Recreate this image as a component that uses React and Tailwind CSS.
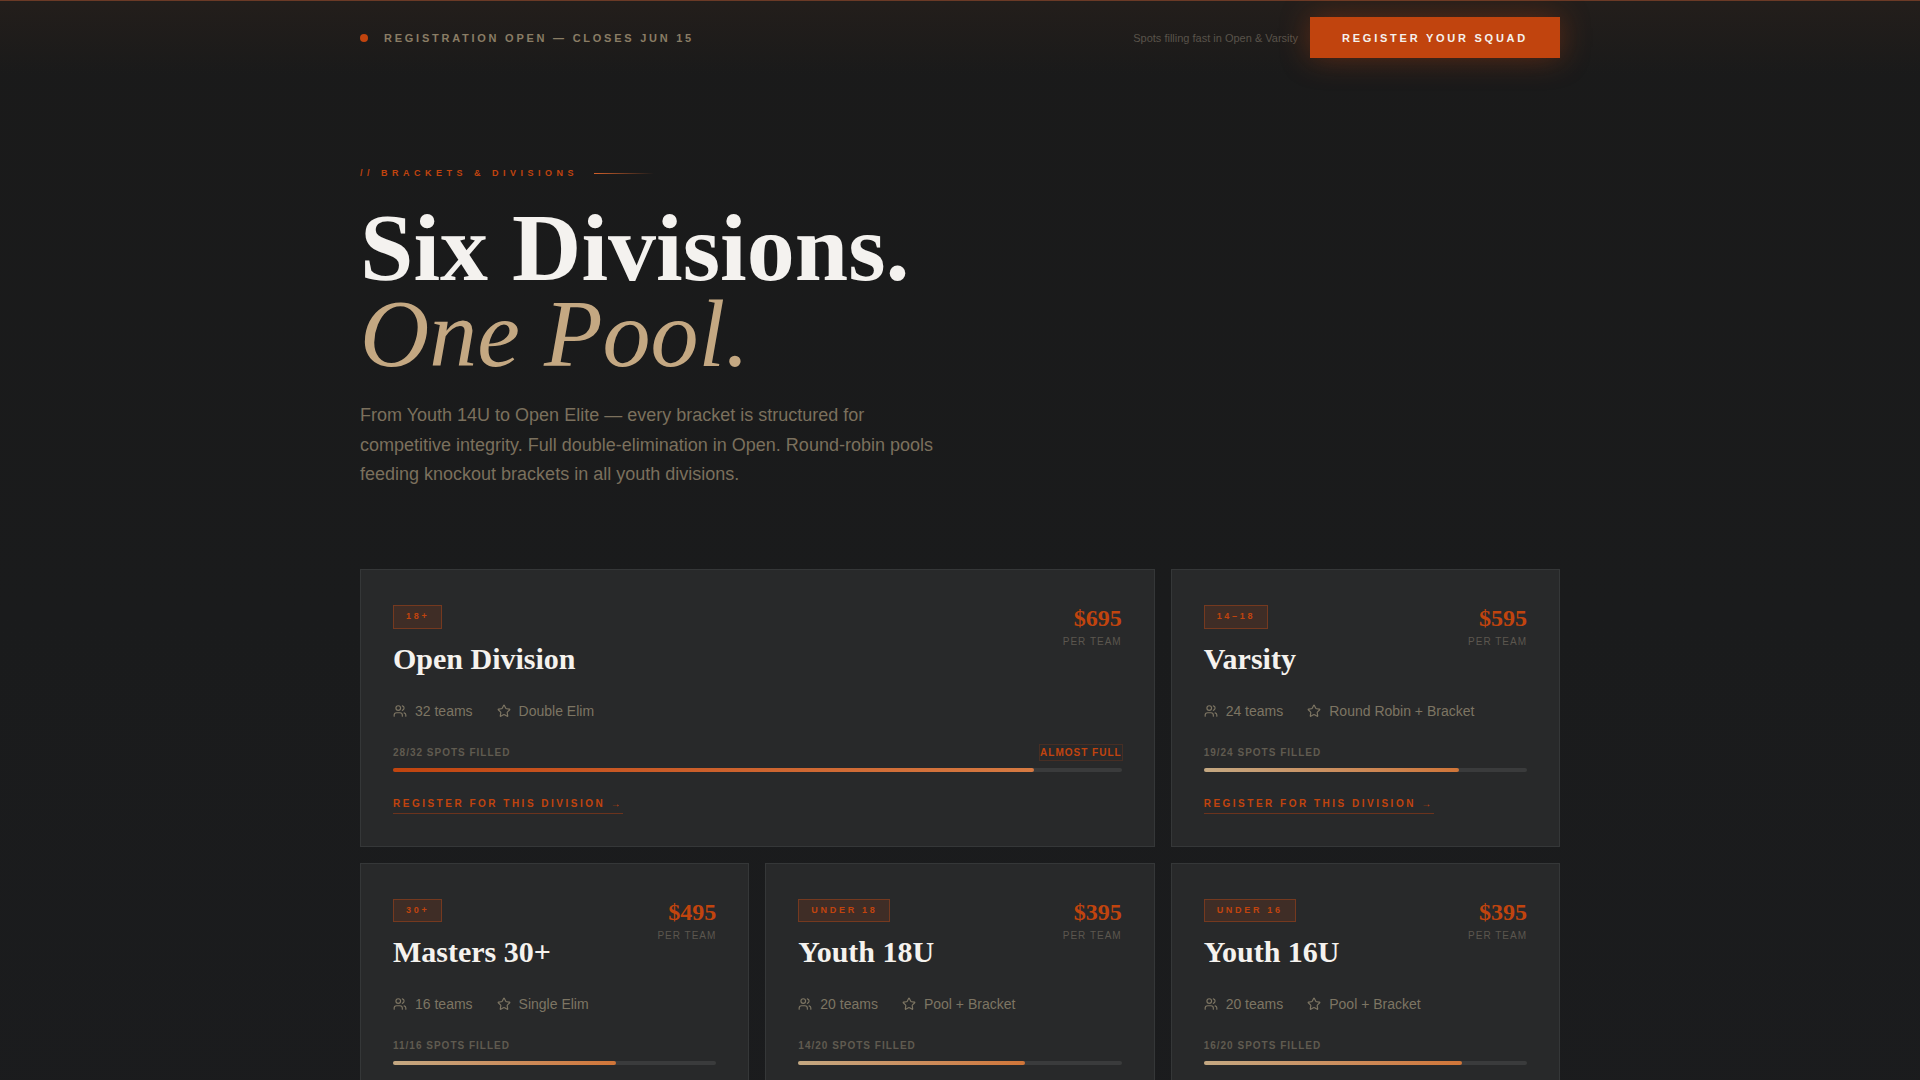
import { Star, Users } from "lucide-react";

const divisions = [
  { age: "18+", name: "Open Division", price: "$695", teams: 32, format: "Double Elim", filled: 28, percent: 88, hot: true, wide: true },
  { age: "14–18", name: "Varsity", price: "$595", teams: 24, format: "Round Robin + Bracket", filled: 19, percent: 79 },
  { age: "30+", name: "Masters 30+", price: "$495", teams: 16, format: "Single Elim", filled: 11, percent: 69 },
  { age: "UNDER 18", name: "Youth 18U", price: "$395", teams: 20, format: "Pool + Bracket", filled: 14, percent: 70 },
  { age: "UNDER 16", name: "Youth 16U", price: "$395", teams: 20, format: "Pool + Bracket", filled: 16, percent: 80 },
];

function TopBar() {
  return (
    <header className="border-t border-[#6b3a26] bg-linear-to-b from-[#231e1b] to-[#1a1a1a]/0">
      <div className="mx-auto flex max-w-[1200px] items-center justify-between py-4">
        <div className="flex items-center gap-4 pt-px">
          <span className="size-2 rounded-full bg-[#c1440e]" />
          <p className="text-[11px] leading-4 font-bold tracking-[0.25em] text-[#8a7d65]">
            REGISTRATION OPEN — CLOSES JUN 15
          </p>
        </div>
        <div className="flex items-center gap-3">
          <span className="pt-px text-[11px] leading-4 text-[#59534a]">Spots filling fast in Open &amp; Varsity</span>
          <button
            type="button"
            className="bg-[#c1440e] px-8 pt-[13px] pb-3 text-[11px] leading-4 font-bold tracking-[0.25em] text-[#f5f2ee] shadow-[0_0_30px_rgba(193,68,14,0.4)]"
          >
            REGISTER YOUR SQUAD
          </button>
        </div>
      </div>
    </header>
  );
}

function Intro() {
  return (
    <section>
      <div className="flex items-center gap-4">
        <p className="text-[9px] leading-[14px] font-bold tracking-[0.5em] text-[#c1440e]">
          // BRACKETS &amp; DIVISIONS
        </p>
        <span className="h-px w-[60px] bg-linear-to-r from-[#d2602a] to-transparent" />
      </div>
      <h1 className="mt-[25px] font-['Liberation_Serif',serif] text-[96px] leading-[86px] font-bold text-[#f4f2ef]">
        Six Divisions.
        <br />
        <em className="font-normal text-[#c4a882]">One Pool.</em>
      </h1>
      <p className="mt-6 max-w-[580px] text-lg leading-[1.65] text-[#7b705d]">
        From Youth 14U to Open Elite — every bracket is structured for competitive integrity. Full
        double-elimination in Open. Round-robin pools feeding knockout brackets in all youth divisions.
      </p>
    </section>
  );
}

function DivisionCard({ age, name, price, teams, format, filled, percent, hot, wide }) {
  return (
    <article
      className={`border border-[#353738] bg-[#28292a] px-8 pt-[35px] pb-8 ${wide ? "col-span-2" : ""}`}
    >
      <div className="flex items-start justify-between">
        <div>
          <span className="block w-fit border border-[#75391f] bg-[#3f2d26] px-3 py-1 text-[9px] leading-[1.5] font-bold tracking-[0.3em] text-[#c1440e]">
            {age}
          </span>
          <h2 className="mt-3 font-['Liberation_Serif',serif] text-3xl leading-9 font-bold text-[#f5f2ee]">{name}</h2>
        </div>
        <div className="text-right">
          <p className="font-['Liberation_Serif',serif] text-2xl leading-[26px] font-bold text-[#c1440e]">{price}</p>
          <p className="mt-[3px] text-[10px] leading-[15px] tracking-[0.1em] text-[#5c574f]">PER TEAM</p>
        </div>
      </div>

      <ul className="mt-6 flex gap-6 text-sm leading-5 text-[#7d7563]">
        <li className="flex items-center gap-2">
          <Users size={14} strokeWidth={2} aria-hidden="true" />
          {teams} teams
        </li>
        <li className="flex items-center gap-2">
          <Star size={14} strokeWidth={2} aria-hidden="true" />
          {format}
        </li>
      </ul>

      <div className="mt-6 flex items-center justify-between text-[10px] leading-[15px] font-bold tracking-[0.1em]">
        <span className="text-[#605b50]">
          {filled}/{teams} SPOTS FILLED
        </span>
        {hot && <span className="text-[#c1440e] ring-1 ring-[#c1440e]/20">ALMOST FULL</span>}
      </div>
      <div className="mt-2 h-1 rounded-full bg-[#3a3b3c]">
        <div
          className={`h-full rounded-full bg-linear-to-r ${hot ? "from-[#c1440e] to-[#d67a42]" : "from-[#c4a882] to-[#d07538]"}`}
          style={{ width: `${percent}%` }}
        />
      </div>

      <a
        href="#register"
        className="mt-6 block w-fit border-b border-[#6b331d] pb-0.5 text-[10px] leading-[15px] font-bold tracking-[0.25em] text-[#c1440e]"
      >
        REGISTER FOR THIS DIVISION →
      </a>
    </article>
  );
}

export default function App() {
  return (
    <div className="min-h-screen bg-[#1a1a1a] bg-linear-to-b from-[#1a1a1a] via-[#1a1b1c] to-[#1b1c1e] font-['Liberation_Sans',sans-serif]">
      <TopBar />
      <main className="mx-auto max-w-[1200px] pt-[92px] pb-24">
        <Intro />
        <div className="mt-[79px] grid grid-cols-3 gap-4">
          {divisions.map((division) => (
            <DivisionCard key={division.name} {...division} />
          ))}
        </div>
      </main>
    </div>
  );
}
